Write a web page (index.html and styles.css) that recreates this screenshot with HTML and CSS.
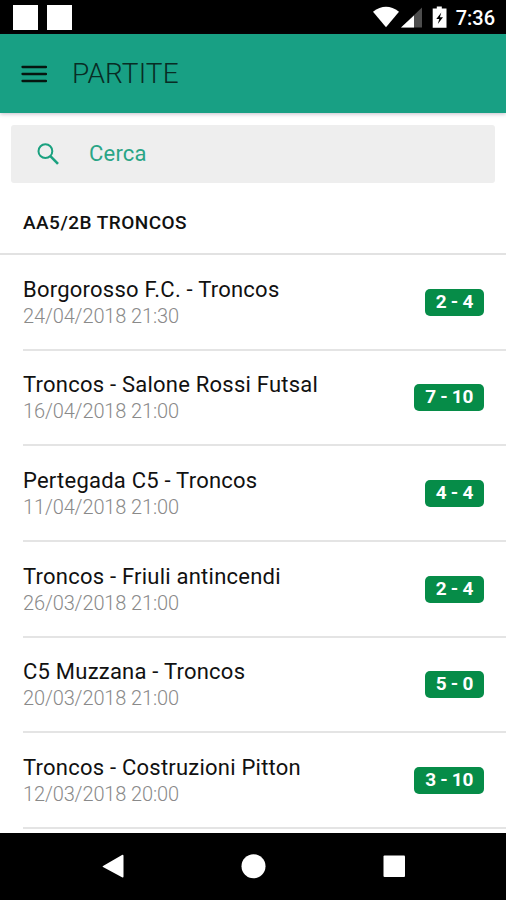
FILE: index.html
```html
<!DOCTYPE html>
<html lang="it">
<head>
<meta charset="utf-8">
<title>Partite</title>
<link rel="stylesheet" href="styles.css">
</head>
<body>
<div class="screen">
  <div class="status">
    <span class="notice"></span><span class="notice"></span>
    <svg class="status-icons" width="76" height="34" viewBox="0 0 76 34">
      <path d="M1 11.800Q14 1.800 27 11.800L14 27.300Z" fill="#fff"/>
      <path d="M50 7.500V27.500H29Z" fill="#4d4d4d"/>
      <path d="M42 15.500V27.500H29Z" fill="#fff"/>
      <path d="M64.800 6.500h5v2H74.500v19.300H60.700V8.500h4.100z" fill="#fff"/>
      <path d="M69.300 12.500l-5 6.500h3l-1.500 5 5.200-6.800h-3.100z" fill="#000"/>
    </svg>
    <span class="clock">7:36</span>
  </div>
  <header class="bar">
    <svg width="26" height="18" viewBox="0 0 26 18"><path d="M1.500 2h23.500M1.500 9h23.500M1.500 16h23.500" stroke="#06150f" stroke-width="2.300" stroke-linecap="round"/></svg>
    <h1 class="title">PARTITE</h1>
  </header>
  <main class="content">
    <div class="search">
      <svg width="22" height="22" viewBox="0 0 22 22" fill="none" stroke="#1aa17f"><circle cx="8.400" cy="8.200" r="6.900" stroke-width="2"/><path d="M13.400 13.200L21 20.800" stroke-width="2.600"/></svg>
      <span class="placeholder">Cerca</span>
    </div>
    <h2 class="group">AA5/2B TRONCOS</h2>
    <ul class="matches">
      <li class="match"><div class="info"><div class="teams">Borgorosso F.C. - Troncos</div><div class="date">24/04/2018 21:30</div></div><span class="score">2 - 4</span></li>
      <li class="match"><div class="info"><div class="teams">Troncos - Salone Rossi Futsal</div><div class="date">16/04/2018 21:00</div></div><span class="score">7 - 10</span></li>
      <li class="match"><div class="info"><div class="teams">Pertegada C5 - Troncos</div><div class="date">11/04/2018 21:00</div></div><span class="score">4 - 4</span></li>
      <li class="match"><div class="info"><div class="teams">Troncos - Friuli antincendi</div><div class="date">26/03/2018 21:00</div></div><span class="score">2 - 4</span></li>
      <li class="match"><div class="info"><div class="teams">C5 Muzzana - Troncos</div><div class="date">20/03/2018 21:00</div></div><span class="score">5 - 0</span></li>
      <li class="match"><div class="info"><div class="teams">Troncos - Costruzioni Pitton</div><div class="date">12/03/2018 20:00</div></div><span class="score">3 - 10</span></li>
    </ul>
  </main>
  <nav class="nav">
    <svg width="506" height="66" viewBox="0 0 506 66" fill="#fff"><path d="M103 33L122 22Q123.500 21.300 123.500 23V43.500Q123.500 45 122 44.200L103 34Q102 33.500 103 33Z"/><circle cx="253.500" cy="33.300" r="12"/><rect x="383.500" y="22.500" width="21.500" height="21.500" rx="1"/></svg>
  </nav>
</div>
</body>
</html>
```
FILE: styles.css
```css
* { box-sizing: border-box; }
body { margin: 0; background: #fff; font-family: Roboto, sans-serif; color: #111; }
.screen { width: 506px; height: 900px; display: flex; flex-direction: column; overflow: hidden; }
.status { height: 34px; flex: none; background: #000; display: flex; align-items: center; padding: 1px 11px 0 13.400px; gap: 9px; }
.notice { width: 25px; height: 25px; background: #fff; }
.status-icons { margin: -1px 0 0 auto; }
.clock { color: #fff; font-size: 20px; font-weight: 500; line-height: 34px; margin-left: -1px; }
.bar { height: 79px; flex: none; background: #18a084; display: flex; align-items: center; gap: 25px; padding: 1px 21px 0; box-shadow: 0 1px 4px rgba(60, 40, 80, .3); position: relative; }
.title { margin: 0; font-size: 28px; font-weight: 300; line-height: 34px; color: #082c24; letter-spacing: .1px; }
.content { flex: 1; min-height: 0; overflow: hidden; padding-top: 12px; }
.search { height: 58px; margin: 0 11px; border-radius: 3px; background: #eee; display: flex; align-items: center; gap: 30px; padding-left: 26px; }
.placeholder { color: #2aa586; font-size: 22px; line-height: 28px; letter-spacing: .2px; }
.group { margin: 0; height: 72px; padding: 27px 23px 0; font-size: 19px; line-height: 26px; font-weight: 500; letter-spacing: .46px; border-bottom: 2px solid #e2e2e2; }
.matches { list-style: none; margin: 0; padding: 0 0 0 23px; }
.match { height: 95.67px; border-bottom: 2px solid #e4e4e4; display: flex; align-items: center; justify-content: space-between; padding: 0 22px 0 0; }
.info { padding-top: 2px; }
.teams { font-size: 22px; line-height: 26px; letter-spacing: .23px; }
.date { font-size: 20px; line-height: 26px; font-weight: 300; color: #8a8a8a; letter-spacing: -.14px; }
.score { height: 27px; padding: 0 11px; border-radius: 5px; background: #068c48; color: #fff; font-size: 19px; font-weight: 700; line-height: 25px; letter-spacing: -.3px; margin-top: 1px; }
.nav { height: 67px; flex: none; background: #000; }
.nav svg { display: block; }
```
